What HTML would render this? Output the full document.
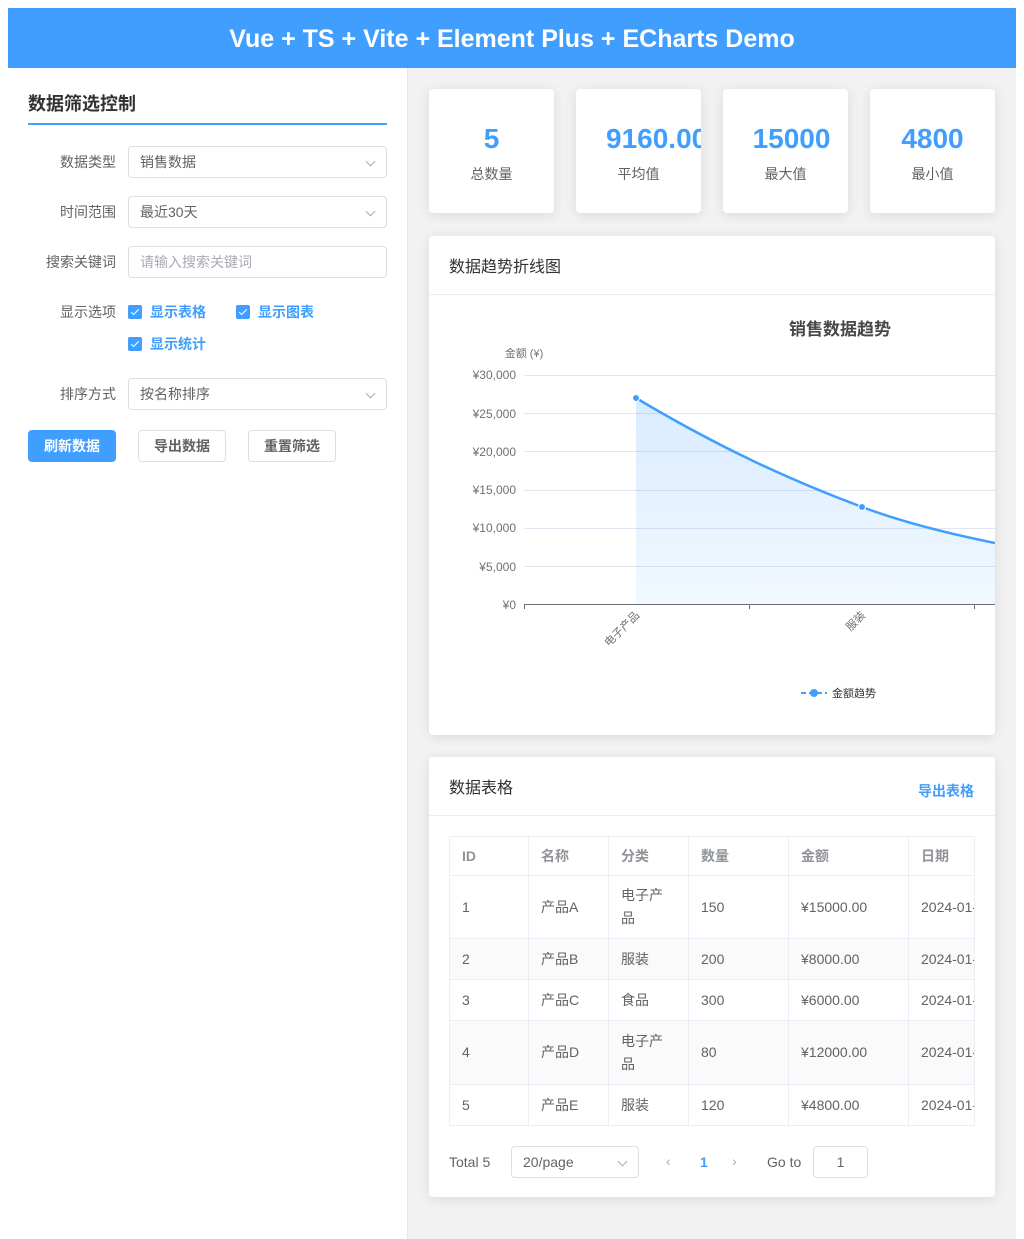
<!DOCTYPE html>
<html><head><meta charset="utf-8"><style>
*{box-sizing:border-box;margin:0;padding:0}
body{width:1024px;height:1239px;background:#fff;font-family:"Liberation Sans","Noto Sans CJK SC",sans-serif;color:#606266;position:relative;overflow:hidden}
.abs{position:absolute}
.hdr{left:8px;top:8px;width:1008px;height:60px;background:#409eff;color:#fff;font-size:25px;font-weight:bold;text-align:center;line-height:63px}
.aside{left:8px;top:68px;width:400px;height:1171px;background:#fff;border-right:1px solid #e6e6e6}
.main{left:408px;top:68px;width:608px;height:1171px;background:#f2f2f2}
.card{background:#fff;border-radius:4px;box-shadow:0 2px 12px rgba(0,0,0,.1)}
.lbl{font-size:14px;color:#606266;text-align:right;width:100px}
.inp{left:128px;width:259px;height:32px;border:1px solid #dcdfe6;border-radius:4px;font-size:14px;color:#606266;line-height:30px;padding-left:11px}
.arr{position:absolute;right:12px;top:11px;width:7px;height:7px;border-right:1px solid #a8abb2;border-bottom:1px solid #a8abb2;transform:rotate(45deg)}
.cb{width:14px;height:14px;background:#409eff;border-radius:2px}
.cb:after{content:"";position:absolute;left:4.5px;top:1.5px;width:3px;height:7px;border-right:1px solid #fff;border-bottom:1px solid #fff;transform:rotate(45deg)}
.cbt{font-size:14px;color:#409eff;font-weight:bold}
.btn{height:32px;border:1px solid #dcdfe6;border-radius:4px;font-size:14px;text-align:center;line-height:30px;color:#606266;font-weight:bold}
.stat{top:89px;width:125px;height:124px;text-align:center}
.stat .v{font-size:28px;font-weight:bold;color:#409eff;margin-top:33px;line-height:34px;white-space:nowrap;overflow:hidden}
.stat .l{font-size:14px;color:#606266;margin-top:8px}
table{border-collapse:collapse;font-size:14px;color:#606266;table-layout:fixed}
td,th{border:1px solid #ebeef5;padding:0 12px;text-align:left;white-space:normal;overflow:hidden}
th{color:#909399;font-weight:bold;height:39px}
td{line-height:23px}
tr.s td{background:#fafafa}
</style></head><body>
<div class="abs hdr">Vue + TS + Vite + Element Plus + ECharts Demo</div>
<div class="abs aside"></div>
<div class="abs main"></div>

<div class="abs" style="left:28px;top:90px;font-size:18px;font-weight:bold;color:#303133">数据筛选控制</div>
<div class="abs" style="left:28px;top:123px;width:359px;height:2px;background:#409eff"></div>

<div class="abs lbl" style="left:16px;top:152px">数据类型</div>
<div class="abs inp" style="top:146px">销售数据<i class="arr"></i></div>
<div class="abs lbl" style="left:16px;top:202px">时间范围</div>
<div class="abs inp" style="top:196px">最近30天<i class="arr"></i></div>
<div class="abs lbl" style="left:16px;top:252px">搜索关键词</div>
<div class="abs inp" style="top:246px;color:#a8abb2">请输入搜索关键词</div>
<div class="abs lbl" style="left:16px;top:302px">显示选项</div>
<div class="abs cb" style="left:128px;top:305px"></div><div class="abs cbt" style="left:150px;top:302px">显示表格</div>
<div class="abs cb" style="left:236px;top:305px"></div><div class="abs cbt" style="left:258px;top:302px">显示图表</div>
<div class="abs cb" style="left:128px;top:337px"></div><div class="abs cbt" style="left:150px;top:334px">显示统计</div>
<div class="abs lbl" style="left:16px;top:384px">排序方式</div>
<div class="abs inp" style="top:378px">按名称排序<i class="arr"></i></div>
<div class="abs btn" style="left:28px;top:430px;width:88px;background:#409eff;border-color:#409eff;color:#fff">刷新数据</div>
<div class="abs btn" style="left:138px;top:430px;width:88px">导出数据</div>
<div class="abs btn" style="left:248px;top:430px;width:88px">重置筛选</div>

<div class="abs card stat" style="left:429px"><div class="v">5</div><div class="l">总数量</div></div>
<div class="abs card stat" style="left:576px"><div class="v" style="text-align:left;padding-left:30px">9160.00</div><div class="l">平均值</div></div>
<div class="abs card stat" style="left:723px"><div class="v" style="padding-left:12px">15000</div><div class="l">最大值</div></div>
<div class="abs card stat" style="left:870px"><div class="v">4800</div><div class="l">最小值</div></div>

<div class="abs card" style="left:429px;top:236px;width:566px;height:499px;overflow:hidden">
<div style="height:59px;border-bottom:1px solid #ebeef5;font-size:16px;color:#303133;padding:17px 20px">数据趋势折线图</div>
<svg class="abs" style="left:0;top:0" width="566" height="499" viewBox="429 236 566 499" font-family="Liberation Sans,Noto Sans CJK SC,sans-serif">
<defs><linearGradient id="g" x1="0" y1="0" x2="0" y2="1"><stop offset="0" stop-color="#409eff" stop-opacity=".2"/><stop offset="1" stop-color="#409eff" stop-opacity=".07"/></linearGradient></defs>
<text x="840" y="335" font-size="17" font-weight="bold" fill="#464646" text-anchor="middle">销售数据趋势</text>
<text x="524" y="357" font-size="11" fill="#6e7079" text-anchor="middle">金额 (¥)</text>
<g stroke="#e0e6f1" stroke-width="1">
<line x1="524" y1="375.5" x2="995" y2="375.5"/><line x1="524" y1="413.5" x2="995" y2="413.5"/><line x1="524" y1="451.5" x2="995" y2="451.5"/><line x1="524" y1="490.5" x2="995" y2="490.5"/><line x1="524" y1="528.5" x2="995" y2="528.5"/><line x1="524" y1="566.5" x2="995" y2="566.5"/></g>
<g font-size="12" fill="#6e7079" text-anchor="end">
<text x="516" y="379">¥30,000</text><text x="516" y="418">¥25,000</text><text x="516" y="456">¥20,000</text><text x="516" y="494">¥15,000</text><text x="516" y="532">¥10,000</text><text x="516" y="571">¥5,000</text><text x="516" y="609">¥0</text></g>
<path d="M636,398 C720,448 790,480 862,507 C910,525 960,536 995,543 L995,604 L636,604Z" fill="url(#g)"/>
<path d="M636,398 C720,448 790,480 862,507 C910,525 960,536 995,543" fill="none" stroke="#409eff" stroke-width="2.5"/>
<g stroke="#6e7079"><line x1="524" y1="604.5" x2="995" y2="604.5"/><line x1="524.5" y1="604" x2="524.5" y2="609"/><line x1="749.5" y1="604" x2="749.5" y2="609"/><line x1="974.5" y1="604" x2="974.5" y2="609"/></g>
<circle cx="636" cy="398" r="3.5" fill="#409eff" stroke="#fff"/><circle cx="862" cy="507" r="3.5" fill="#409eff" stroke="#fff"/>
<g font-size="11" fill="#6e7079" text-anchor="end"><text transform="translate(640,616) rotate(-45)">电子产品</text><text transform="translate(866,616) rotate(-45)">服装</text></g>
<line x1="801" y1="693" x2="827" y2="693" stroke="#409eff" stroke-width="2" stroke-dasharray="5,3"/><circle cx="814" cy="693" r="4" fill="#409eff"/>
<text x="832" y="697" font-size="11" fill="#333">金额趋势</text>
</svg></div>

<div class="abs card" style="left:429px;top:757px;width:566px;height:440px;overflow:hidden">
<div style="height:59px;border-bottom:1px solid #ebeef5;font-size:16px;color:#303133;padding:17px 20px;position:relative">数据表格<span style="position:absolute;right:21px;top:24px;font-size:14px;color:#409eff;font-weight:bold">导出表格</span></div>
<div style="position:absolute;left:20px;top:79px;width:526px;overflow:hidden;border-right:1px solid #ebeef5">
<table style="width:600px">
<colgroup><col style="width:79px"><col style="width:80px"><col style="width:80px"><col style="width:100px"><col style="width:120px"><col style="width:141px"></colgroup>
<tr><th>ID</th><th>名称</th><th>分类</th><th>数量</th><th>金额</th><th>日期</th></tr>
<tr style="height:63px"><td>1</td><td>产品A</td><td>电子产品</td><td>150</td><td>¥15000.00</td><td style="white-space:nowrap">2024-01-01</td></tr>
<tr class="s" style="height:41px"><td>2</td><td>产品B</td><td>服装</td><td>200</td><td>¥8000.00</td><td style="white-space:nowrap">2024-01-02</td></tr>
<tr style="height:41px"><td>3</td><td>产品C</td><td>食品</td><td>300</td><td>¥6000.00</td><td style="white-space:nowrap">2024-01-03</td></tr>
<tr class="s" style="height:64px"><td>4</td><td>产品D</td><td>电子产品</td><td>80</td><td>¥12000.00</td><td style="white-space:nowrap">2024-01-04</td></tr>
<tr style="height:41px"><td>5</td><td>产品E</td><td>服装</td><td>120</td><td>¥4800.00</td><td style="white-space:nowrap">2024-01-05</td></tr>
</table></div>
<div class="abs" style="left:20px;top:397px;font-size:14px">Total 5</div>
<div class="abs" style="left:82px;top:389px;width:128px;height:32px;border:1px solid #dcdfe6;border-radius:4px;font-size:14px;line-height:30px;padding-left:11px">20/page<i class="arr"></i></div>
<div class="abs" style="left:237px;top:396px;font-size:14px;color:#a8abb2">‹</div>
<div class="abs" style="left:271px;top:397px;font-size:14px;color:#409eff;font-weight:bold">1</div>
<div class="abs" style="left:303px;top:396px;font-size:14px;color:#a8abb2">›</div>
<div class="abs" style="left:338px;top:397px;font-size:14px">Go to</div>
<div class="abs" style="left:384px;top:389px;width:55px;height:32px;border:1px solid #dcdfe6;border-radius:4px;font-size:14px;line-height:30px;text-align:center">1</div>
</div>
</body></html>
